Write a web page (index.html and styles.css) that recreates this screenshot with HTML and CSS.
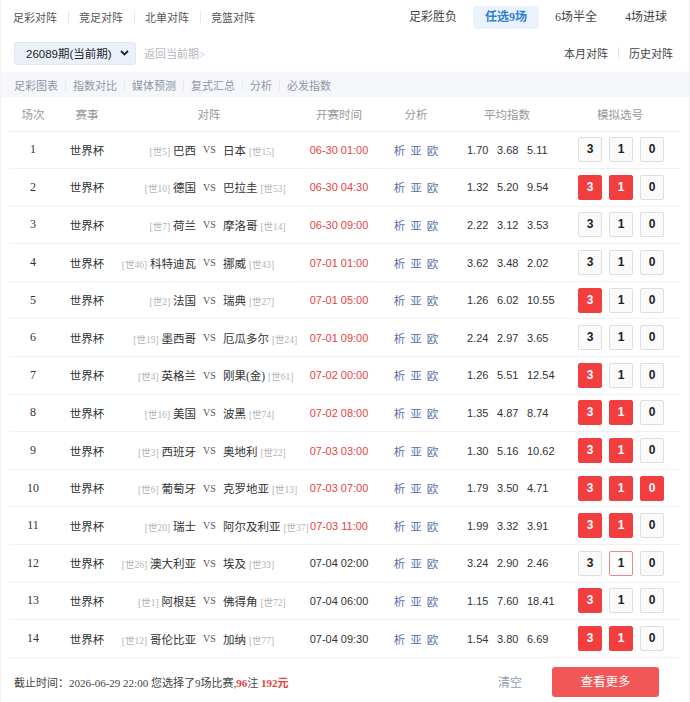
FILE: index.html
```html
<!DOCTYPE html>
<html>
<head lang="zh-CN">
    <meta charset="UTF-8">
    <title>任选9场_对阵</title>
    <link rel="stylesheet" href="styles.css">
</head>
<body>
<div id="page">
    <div class="topbar">
        <ul class="nav">
            <li>足彩对阵</li>
            <li>竞足对阵</li>
            <li>北单对阵</li>
            <li>竞篮对阵</li>
        </ul>
        <ul class="tabs">
            <li>足彩胜负</li>
            <li class="selected">任选9场</li>
            <li>6场半全</li>
            <li>4场进球</li>
        </ul>
    </div>
    <div class="toolbar">
        <div class="period">
            <div class="period-select">
                <span>26089期(当前期)</span>
                <svg width="9" height="6" viewBox="0 0 9 6"><path d="M1 1l3.5 3.5L8 1" fill="none" stroke="#222" stroke-width="1.8"/></svg>
            </div>
            <span class="back">返回当前期&gt;</span>
        </div>
        <ul class="links">
            <li>本月对阵</li>
            <li>历史对阵</li>
        </ul>
    </div>
    <ul class="subnav">
        <li>足彩图表</li>
        <li>指数对比</li>
        <li>媒体预测</li>
        <li>复式汇总</li>
        <li>分析</li>
        <li>必发指数</li>
    </ul>
    <table class="matches">
        <thead>
            <tr>
                <th class="c-no">场次</th>
                <th class="c-league">赛事</th>
                <th class="c-vs">对阵</th>
                <th class="c-time">开赛时间</th>
                <th class="c-ana">分析</th>
                <th class="c-odds">平均指数</th>
                <th class="c-pick">模拟选号</th>
            </tr>
        </thead>
        <tbody id="rows"></tbody>
    </table>
    <div class="footer">
        <p class="summary">截止时间：2026-06-29 22:00 您选择了9场比赛,<b>96</b>注 <b>192元</b></p>
        <div class="actions">
            <span class="clear">清空</span>
            <span class="more">查看更多</span>
        </div>
    </div>
</div>
<script>
    // 场次数据: 主队排名, 主队, 客队, 客队排名, 时间, 是否红色, 指数, 选号
    var data = [
        [5,"巴西","日本",15,"06-30 01:00",1,["1.70","3.68","5.11"],""],
        [10,"德国","巴拉圭",53,"06-30 04:30",1,["1.32","5.20","9.54"],"31"],
        [7,"荷兰","摩洛哥",14,"06-30 09:00",1,["2.22","3.12","3.53"],""],
        [46,"科特迪瓦","挪威",43,"07-01 01:00",1,["3.62","3.48","2.02"],""],
        [2,"法国","瑞典",27,"07-01 05:00",1,["1.26","6.02","10.55"],"3"],
        [19,"墨西哥","厄瓜多尔",24,"07-01 09:00",1,["2.24","2.97","3.65"],""],
        [4,"英格兰","刚果(金)",61,"07-02 00:00",1,["1.26","5.51","12.54"],"3"],
        [16,"美国","波黑",74,"07-02 08:00",1,["1.35","4.87","8.74"],"31"],
        [3,"西班牙","奥地利",22,"07-03 03:00",1,["1.30","5.16","10.62"],"31"],
        [6,"葡萄牙","克罗地亚",13,"07-03 07:00",1,["1.79","3.50","4.71"],"310"],
        [20,"瑞士","阿尔及利亚",37,"07-03 11:00",1,["1.99","3.32","3.91"],"31"],
        [26,"澳大利亚","埃及",33,"07-04 02:00",0,["3.24","2.90","2.46"],"h1"],
        [1,"阿根廷","佛得角",72,"07-04 06:00",0,["1.15","7.60","18.41"],"3"],
        [12,"哥伦比亚","加纳",77,"07-04 09:30",0,["1.54","3.80","6.69"],"31"]
    ];
    var oRows = document.getElementById("rows");
    var html = "";
    for(var i=0;i<data.length;i++){
        var d = data[i];
        var picks = "";
        var opts = ["3","1","0"];
        for(var j=0;j<opts.length;j++){
            var cls = "";
            if(d[7].indexOf(opts[j])>-1){
                cls = d[7].charAt(0)=="h" ? "hover" : "selected";
            }
            picks += '<span class="'+cls+'">'+opts[j]+'</span>';
        }
        html += '<tr>'
            + '<td class="c-no">'+(i+1)+'</td>'
            + '<td class="c-league">世界杯</td>'
            + '<td class="c-vs"><div class="vs">'
            + '<span class="home"><i>[世'+d[0]+']</i> '+d[1]+'</span>'
            + '<span class="mark">VS</span>'
            + '<span class="away">'+d[2]+' <i>[世'+d[3]+']</i></span>'
            + '</div></td>'
            + '<td class="c-time'+(d[5]?' red':'')+'">'+d[4]+'</td>'
            + '<td class="c-ana"><a>析</a><a>亚</a><a>欧</a></td>'
            + '<td class="c-odds"><span>'+d[6][0]+'</span><span>'+d[6][1]+'</span><span>'+d[6][2]+'</span></td>'
            + '<td class="c-pick"><div class="picks">'+picks+'</div></td>'
            + '</tr>';
    }
    oRows.innerHTML = html;
</script>
</body>
</html>
```
FILE: styles.css
```css
*{
    padding:0;
    margin:0;
    box-sizing:border-box;
}
li{
    list-style:none;
}
body{
    font-family:"Liberation Serif","Noto Sans CJK SC",serif;
    font-size:11px;
    color:#333;
    background:#fff;
}
#page{
    width:690px;
    height:702px;
    border-left:1px solid #f2f2f2;
    border-right:1px solid #eee;
}
.topbar{
    height:34px;
    display:flex;
    justify-content:space-between;
    align-items:center;
    padding:0 10px 0 12px;
}
.nav,.links,.subnav{
    display:flex;
    align-items:center;
}
.nav li,.links li,.subnav li{
    display:flex;
    align-items:center;
}
.nav li + li::before,.links li + li::before,.subnav li + li::before{
    content:"";
    width:1px;
    height:12px;
    background:#e6e6e6;
    margin:0 10.5px;
}
.nav li{
    color:#555;
    font-size:11px;
}
.tabs{
    display:flex;
    gap:4px;
    padding-top:1px;
}
.tabs li{
    font-size:12px;
    color:#444;
    height:23px;
    line-height:23px;
    padding:0 12px;
    border-radius:4px;
}
.tabs .selected{
    background:#eaf3fd;
    color:#2d7fd6;
    font-weight:bold;
}
.toolbar{
    height:38px;
    display:flex;
    justify-content:space-between;
    align-items:center;
    padding:0 16px 0 13px;
}
.period{
    display:flex;
    align-items:center;
}
.period-select{
    width:122px;
    height:23px;
    display:flex;
    align-items:center;
    justify-content:space-between;
    padding:0 6px 0 11px;
    background:#eaf1fb;
    border:1px solid #dfe8f4;
    border-radius:3px;
    font-family:"Liberation Sans","Noto Sans CJK SC",sans-serif;
    font-size:11.5px;
    color:#222;
}
.back{
    margin-left:8px;
    color:#b4b8c0;
    font-size:11px;
}
.links li{
    color:#444;
    font-size:11px;
}
.links li + li::before{
    margin:0 10px;
}
.subnav{
    height:25px;
    background:#f5f7fa;
    padding:0 13px;
}
.subnav li{
    color:#8d96a8;
    font-size:11px;
}
.subnav li + li::before{
    margin:0 7px;
    background:#e8ebf0;
}
.matches{
    width:672px;
    margin:0 8px;
    border-collapse:collapse;
    table-layout:fixed;
}
.matches th{
    height:34px;
    font-weight:normal;
    color:#999;
    font-size:11.5px;
    border-bottom:1px solid #eee;
}
.matches td{
    height:37.6px;
    border-bottom:1px solid #f0f0f0;
    text-align:center;
}
.c-no{width:48px;}
.c-league{width:60px;}
.c-vs{width:184px;}
.c-time{width:76px;}
.c-ana{width:78px;}
.c-odds{width:104px;}
.c-pick{width:122px;}
td.c-no{
    font-size:12px;
}
td.c-league{
    font-size:11.5px;
}
.vs{
    display:flex;
    align-items:center;
    font-size:11.5px;
}
.vs i{
    font-style:normal;
    font-size:9.5px;
    color:#b3b3b3;
}
.home{
    width:79px;
    text-align:right;
    white-space:nowrap;
}
.mark{
    width:27px;
    text-align:center;
    font-size:10px;
    color:#555;
}
.away{
    width:78px;
    text-align:left;
    white-space:nowrap;
}
td.c-time{
    font-family:"Liberation Sans",sans-serif;
    font-size:11px;
    color:#333;
}
td.red{
    color:#e84343;
}
.c-ana a{
    color:#5a74a8;
    font-size:11.5px;
    margin:0 2.5px;
}
td.c-odds{
    text-align:left;
    padding-left:12px;
    font-family:"Liberation Sans",sans-serif;
    font-size:11px;
    color:#333;
}
.c-odds span{
    display:inline-block;
    width:30px;
}
.picks{
    display:flex;
    justify-content:center;
    gap:7px;
    padding-left:2px;
}
.picks span{
    width:24px;
    height:25px;
    line-height:23px;
    border:1px solid #dedede;
    background:#fafafa;
    border-radius:2px;
    font-family:"Liberation Sans",sans-serif;
    font-weight:bold;
    font-size:12px;
    color:#222;
    cursor:pointer;
}
.picks .selected{
    background:#f23e3e;
    border-color:#f23e3e;
    color:#fff;
}
.picks .hover{
    border-color:#e88a8a;
    background:#fff;
}
.footer{
    display:flex;
    justify-content:space-between;
    align-items:center;
    padding:9px 30px 0 13px;
}
.summary{
    color:#444;
    font-size:11px;
}
.summary b{
    color:#e8413a;
}
.actions{
    display:flex;
    align-items:center;
}
.clear{
    color:#8f9db3;
    font-size:12px;
    margin-right:30px;
}
.more{
    width:107px;
    height:30px;
    line-height:30px;
    text-align:center;
    background:#f25757;
    color:#fff;
    font-size:12.5px;
    border-radius:3px;
}
```
